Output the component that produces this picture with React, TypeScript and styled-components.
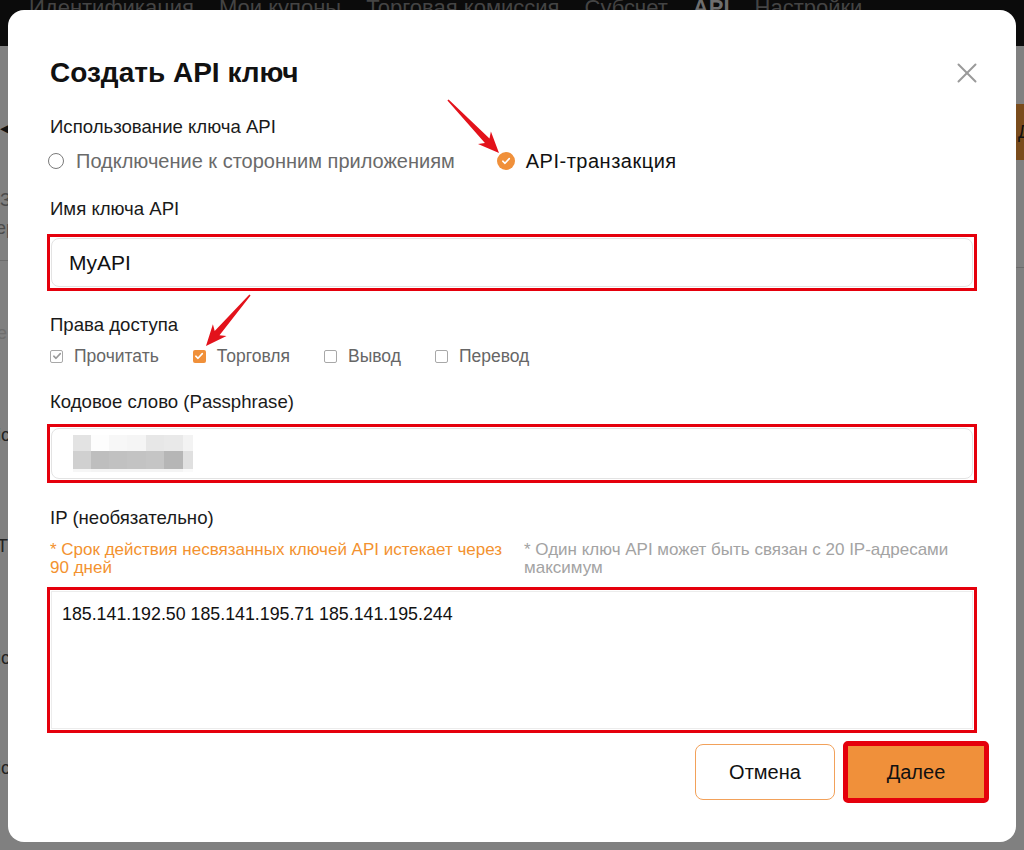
import React from "react";
import styled, { createGlobalStyle } from "styled-components";
import { X } from "lucide-react";

const ORANGE = "#f0903a";
const MARK_RED = "#e5000c";

const GlobalStyle = createGlobalStyle`
  html, body { margin: 0; padding: 0; }
  body {
    font-family: "Liberation Sans", Arial, sans-serif;
    background: #808080;
  }
  * { box-sizing: border-box; }
`;

const Screen = styled.div`
  position: relative;
  width: 1024px;
  height: 850px;
  overflow: hidden;
  display: flex;
  flex-direction: column;
  background: #808080;
`;

const TopNav = styled.nav`
  flex: none;
  height: 46px;
  background: #0b0b0b;
  display: flex;
  gap: 25px;
  padding-left: 29px;
`;

const NavItem = styled.span<{ $active?: boolean }>`
  font-size: 22px;
  line-height: 16px;
  white-space: nowrap;
  color: ${(p) => (p.$active ? "#6e6e6e" : "#444")};
  font-weight: ${(p) => (p.$active ? 700 : 400)};
`;

const Backdrop = styled.div`
  flex: 1;
  display: flex;
  justify-content: space-between;
`;

const EdgeStrip = styled.div`
  width: 8px;
  overflow: hidden;
  display: flex;
  flex-direction: column;
`;

const EdgeText = styled.span<{ $mt: number; $color?: string; $shift?: number }>`
  margin-top: ${(p) => p.$mt}px;
  margin-left: ${(p) => p.$shift ?? 0}px;
  font-size: 18px;
  line-height: 20px;
  white-space: nowrap;
  color: ${(p) => p.$color ?? "#222"};
`;

const EdgeRule = styled.div<{ $mt: number }>`
  margin-top: ${(p) => p.$mt}px;
  height: 1px;
  background: #6c6c6c;
`;

const EdgeBlock = styled.div<{ $mt: number }>`
  margin-top: ${(p) => p.$mt}px;
  height: 56px;
  background: #7a4c1c;
  display: flex;
  align-items: center;
  padding-left: 2px;
  font-size: 18px;
  color: #111;
`;

/* dialog */

const Dialog = styled.div`
  position: absolute;
  left: 8px;
  top: 10px;
  width: 1008px;
  height: 832px;
  background: #fff;
  border-radius: 16px;
  padding: 46px 39px 0;
  display: flex;
  flex-direction: column;
`;

const Header = styled.div`
  display: flex;
  align-items: center;
  justify-content: space-between;
  padding-left: 3px;
`;

const Title = styled.h2`
  margin: 0;
  font-size: 28px;
  line-height: 34px;
  font-weight: 700;
  color: #111;
`;

const CloseButton = styled.button`
  border: 0;
  background: none;
  padding: 0;
  margin-right: -7px;
  color: #9a9a9a;
  display: flex;
  cursor: pointer;
`;

const FieldLabel = styled.div<{ $mt: number }>`
  margin-top: ${(p) => p.$mt}px;
  padding-left: 3px;
  font-size: 18.6px;
  line-height: 24px;
  color: #1a1a1a;
`;

const RadioRow = styled.div`
  margin-top: 10px;
  display: flex;
  align-items: center;
  gap: 42px;
  padding-left: 1px;
  height: 24px;
`;

const RadioOption = styled.label<{ $checked?: boolean }>`
  display: flex;
  align-items: center;
  gap: ${(p) => (p.$checked ? 11 : 12)}px;
  font-size: 20px;
  line-height: 24px;
  letter-spacing: ${(p) => (p.$checked ? 0.5 : 0)}px;
  color: ${(p) => (p.$checked ? "#111" : "#6a6a6a")};
`;

const RadioDot = styled.span<{ $checked?: boolean }>`
  flex: none;
  width: ${(p) => (p.$checked ? 18 : 16)}px;
  height: ${(p) => (p.$checked ? 18 : 16)}px;
  border-radius: 50%;
  border: ${(p) => (p.$checked ? "none" : "1.5px solid #7a7a7a")};
  background: ${(p) => (p.$checked ? ORANGE : "#fff")};
  display: flex;
  align-items: center;
  justify-content: center;
`;

const Highlight = styled.div<{ $mt: number }>`
  margin-top: ${(p) => p.$mt}px;
  border: 3px solid ${MARK_RED};
  padding: 1px;
`;

const TextBox = styled.div<{ $h: number }>`
  height: ${(p) => p.$h}px;
  border: 1px solid #e3e3e3;
  border-radius: 8px;
  display: flex;
  align-items: center;
  padding-left: 17px;
  font-size: 21px;
  color: #111;
`;

const Pixelated = styled.div`
  display: grid;
  grid-template-columns: 18px 18px 18px 19px 18px 19px 10px;
  grid-template-rows: 16px 18px 3px;
  margin-left: 4px;
`;

const Pixel = styled.span<{ $c: string }>`
  background: ${(p) => p.$c};
`;

const CheckRow = styled.div`
  margin-top: 8px;
  display: flex;
  align-items: center;
  gap: 34px;
  padding-left: 3px;
  height: 22px;
`;

const CheckItem = styled.label`
  display: flex;
  align-items: center;
  gap: 11px;
  font-size: 17.5px;
  line-height: 22px;
  color: #666;
`;

const Box = styled.span<{ $state: "locked" | "on" | "off" }>`
  flex: none;
  width: 13px;
  height: 13px;
  border-radius: 2px;
  display: flex;
  align-items: center;
  justify-content: center;
  border: ${(p) => (p.$state === "on" ? "none" : "1px solid #a8a8a8")};
  background: ${(p) => (p.$state === "on" ? ORANGE : "#fff")};
`;

const Notes = styled.div`
  margin-top: 11px;
  display: grid;
  grid-template-columns: 474px 1fr;
  padding-left: 3px;
  font-size: 17px;
  line-height: 18px;
  white-space: nowrap;
`;

const Note = styled.div<{ $tone: "warn" | "muted" }>`
  color: ${(p) => (p.$tone === "warn" ? "#f3922f" : "#a3a3a3")};
`;

const AreaBox = styled.div`
  height: 138px;
  border: 1px solid #ececec;
  padding: 12px 10px;
  font-size: 17.8px;
  line-height: 20px;
  color: #111;
`;

const Footer = styled.div`
  margin-top: 11px;
  margin-right: -9px;
  display: flex;
  justify-content: flex-end;
  gap: 11px;
`;

const Button = styled.button<{ $primary?: boolean; $marked?: boolean }>`
  width: 140px;
  height: 56px;
  border-radius: ${(p) => (p.$primary ? 2 : 8)}px;
  border: ${(p) => (p.$primary ? "none" : `1px solid #f2a15a`)};
  background: ${(p) => (p.$primary ? ORANGE : "#fff")};
  color: #111;
  font-family: inherit;
  font-size: 20px;
  outline: ${(p) => (p.$marked ? `5px solid ${MARK_RED}` : "none")};
  outline-offset: -2px;
  cursor: pointer;
`;

const Marks = styled.svg`
  position: absolute;
  inset: 0;
  pointer-events: none;
`;

const Check = ({ color }: { color: string }) => (
  <svg width="10" height="10" viewBox="0 0 10 10">
    <path d="M1.8 5.2 L4 7.3 L8.3 2.6" fill="none" stroke={color} strokeWidth="1.6" strokeLinecap="round" strokeLinejoin="round" />
  </svg>
);

function arrowPoints(x1: number, y1: number, x2: number, y2: number) {
  const dx = x2 - x1;
  const dy = y2 - y1;
  const len = Math.hypot(dx, dy);
  const ux = dx / len;
  const uy = dy / len;
  const px = -uy;
  const py = ux;
  const shape = [
    [0, -0.8],
    [len - 17, -3.2],
    [len - 21, -9],
    [len, 0],
    [len - 21, 9],
    [len - 17, 3.2],
    [0, 0.8],
  ];
  return shape.map(([a, b]) => `${(x1 + ux * a + px * b).toFixed(1)},${(y1 + uy * a + py * b).toFixed(1)}`).join(" ");
}

const blurRows = [
  ["#e3e3e3", "#fdfdfd", "#f7f7f7", "#f5f5f5", "#e7e7e7", "#e9e9e9", "#f3f3f3"],
  ["#d0d0d0", "#bebebe", "#c1c1c1", "#c3c3c3", "#c5c5c5", "#b6b6b6", "#e0e0e0"],
  ["#f6f6f6", "#f4f4f4", "#f4f4f4", "#f4f4f4", "#f4f4f4", "#f4f4f4", "#fafafa"],
];

const navLinks = ["Идентификация", "Мои купоны", "Торговая комиссия", "Субсчет", "API", "Настройки"];

export default function App() {
  return (
    <>
      <GlobalStyle />
      <Screen>
        <TopNav>
          {navLinks.map((l) => (
            <NavItem key={l} $active={l === "API"}>
              {l}
            </NavItem>
          ))}
        </TopNav>
        <Backdrop>
          <EdgeStrip>
            <EdgeText $mt={72} $color="#111">◀</EdgeText>
            <EdgeText $mt={52} $color="#4c4c4c">З</EdgeText>
            <EdgeText $mt={8} $color="#4c4c4c" $shift={-4}>ер</EdgeText>
            <EdgeRule $mt={22} />
            <EdgeText $mt={62} $color="#6e6e6e" $shift={-3}>е</EdgeText>
            <EdgeText $mt={82} $shift={-3}>ic</EdgeText>
            <EdgeText $mt={91} $shift={-3}>Tl</EdgeText>
            <EdgeText $mt={92} $shift={-3}>ic</EdgeText>
            <EdgeText $mt={90} $shift={-3}>ic</EdgeText>
          </EdgeStrip>
          <EdgeStrip>
            <EdgeBlock $mt={58}>Д</EdgeBlock>
            <EdgeRule $mt={107} />
          </EdgeStrip>
        </Backdrop>

        <Dialog>
          <Header>
            <Title>Создать API ключ</Title>
            <CloseButton aria-label="Закрыть">
              <X size={34} strokeWidth={1.4} />
            </CloseButton>
          </Header>

          <FieldLabel $mt={25}>Использование ключа API</FieldLabel>
          <RadioRow>
            <RadioOption>
              <RadioDot />
              Подключение к сторонним приложениям
            </RadioOption>
            <RadioOption $checked>
              <RadioDot $checked>
                <Check color="#fff" />
              </RadioDot>
              API-транзакция
            </RadioOption>
          </RadioRow>

          <FieldLabel $mt={24}>Имя ключа API</FieldLabel>
          <Highlight $mt={13}>
            <TextBox $h={49}>MyAPI</TextBox>
          </Highlight>

          <FieldLabel $mt={22}>Права доступа</FieldLabel>
          <CheckRow>
            <CheckItem>
              <Box $state="locked">
                <Check color="#9a9a9a" />
              </Box>
              Прочитать
            </CheckItem>
            <CheckItem>
              <Box $state="on">
                <Check color="#fff" />
              </Box>
              Торговля
            </CheckItem>
            <CheckItem>
              <Box $state="off" />
              Вывод
            </CheckItem>
            <CheckItem>
              <Box $state="off" />
              Перевод
            </CheckItem>
          </CheckRow>

          <FieldLabel $mt={23}>Кодовое слово (Passphrase)</FieldLabel>
          <Highlight $mt={10}>
            <TextBox $h={51}>
              <Pixelated>
                {blurRows.flatMap((row, r) => row.map((c, i) => <Pixel key={`${r}-${i}`} $c={c} />))}
              </Pixelated>
            </TextBox>
          </Highlight>

          <FieldLabel $mt={23}>IP (необязательно)</FieldLabel>
          <Notes>
            <Note $tone="warn">
              * Срок действия несвязанных ключей API истекает через
              <br />
              90 дней
            </Note>
            <Note $tone="muted">
              * Один ключ API может быть связан с 20 IP-адресами
              <br />
              максимум
            </Note>
          </Notes>
          <Highlight $mt={10}>
            <AreaBox>185.141.192.50 185.141.195.71 185.141.195.244</AreaBox>
          </Highlight>

          <Footer>
            <Button>Отмена</Button>
            <Button $primary $marked>
              Далее
            </Button>
          </Footer>
        </Dialog>

        <Marks width="1024" height="850" viewBox="0 0 1024 850">
          <polygon points={arrowPoints(448, 100, 499, 153)} fill="#e3121b" />
          <polygon points={arrowPoints(250, 295, 206, 346)} fill="#e3121b" />
        </Marks>
      </Screen>
    </>
  );
}
